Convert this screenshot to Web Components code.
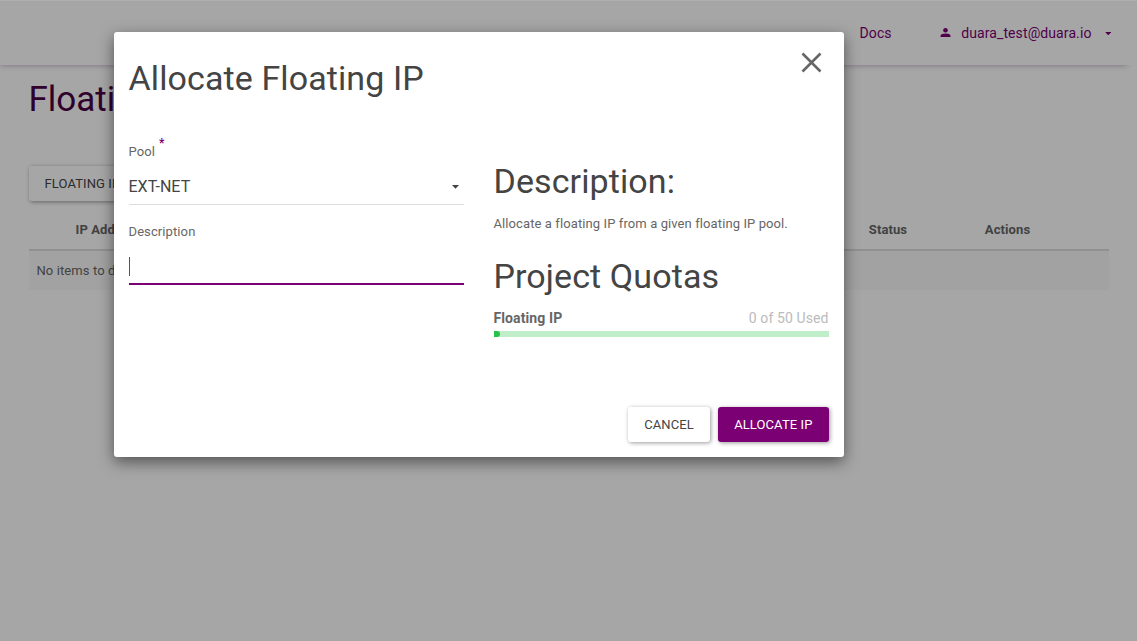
<!DOCTYPE html>
<html lang="en">
<head>
<meta charset="utf-8">
<title>Floating IPs</title>
<style>
html,body{margin:0;height:100%;overflow:hidden;background:#fff}
body{font:13px/24px Roboto,"Liberation Sans",sans-serif;letter-spacing:.1px;color:#666}
</style>
</head>
<body>
<app-page></app-page>
<script>
function define(name, html) {
  const t = document.createElement('template');
  t.innerHTML = html;
  customElements.define(name, class extends HTMLElement {
    constructor() {
      super();
      this.attachShadow({ mode: 'open' }).appendChild(t.content.cloneNode(true));
    }
  });
}

define('app-caret', `<style>
:host{display:block;width:7px;height:4px;line-height:0}
svg{display:block;width:100%;height:100%}
</style><svg width="7" height="4" viewBox="0 0 7 4"><path d="M0 0h7L3.5 3.8z" fill="currentColor"/></svg>`);

define('app-button', `<style>
:host{display:block;box-sizing:border-box;height:35px;padding:0 16px;border-radius:3px;background:#fff;color:#444;
font-size:13px;line-height:35px;letter-spacing:.1px;text-transform:uppercase;white-space:nowrap;box-shadow:1px 1px 4px rgba(0,0,0,.4)}
:host([primary]){background:#7b0073;color:#fff}
</style><slot></slot>`);

define('nav-bar', `<style>
:host{display:flex;box-sizing:border-box;height:65px;justify-content:flex-end;
padding:21px 26px 0 0;background:#fff;color:#7b0073;font-size:14px;letter-spacing:.1px;box-shadow:-5px 5px 6px -5px rgba(60,0,60,.34)}
.user{display:flex;margin-left:48.500px}
.user svg{margin:7px 10px 0 0}
app-caret{margin:10.500px 0 0 13px;width:6.500px;height:3.500px}
</style><span class="docs">Docs</span><div class="user">
<svg width="11" height="9" viewBox="0 0 11 9" fill="currentColor"><circle cx="5.500" cy="2.300" r="2.300"/><path d="M.5 9V7.800C.5 6.300 3.300 5.600 5.500 5.600s5 .7 5 2.200V9z"/></svg><span class="mail">duara_test@duara.io</span><app-caret></app-caret></div>`);

define('ip-table', `<style>
:host{display:block}
.head{display:grid;grid-template-columns:158px 623px 157px 82px 1fr;height:42px;box-sizing:border-box;
border-bottom:2px solid #ddd;font-weight:700;line-height:42px}
.head span{white-space:nowrap;text-align:center}
.head .ip{text-align:left;padding-left:47px}
.row{height:39px;line-height:39px;padding-left:8px;background:#f9f9f9}
</style><div class="head"><span class="ip">IP Add</span><span></span><span>Status</span><span>Actions</span></div>
<div class="row">No items to d</div>`);

define('form-field', `<style>
:host{display:block;letter-spacing:.1px}
.label{display:flex;height:24px}
.req{display:none;color:#7b0073;font-size:12px;font-weight:700;line-height:13px;margin-left:4px;margin-top:-3px}
:host([required]) .req{display:block}
.control{display:flex;height:41px;box-sizing:border-box;align-items:center;justify-content:space-between;
border-bottom:1px solid #ddd;color:#444;font-size:16px;letter-spacing:.03px;padding:5px 5px 0 0}
:host([focused]) .control{border-bottom:2px solid #7b0073}
::slotted(.cursor){width:1px;height:19px;background:#555}
</style><div class="label"><slot name="label"></slot><span class="req">*</span></div>
<div class="control"><slot></slot></div>`);

define('quota-meter', `<style>
:host{display:block;font-size:14px;letter-spacing:0}
.line{display:flex;justify-content:space-between;height:25px;line-height:24px}
b{font-weight:700;letter-spacing:.1px}
.used{color:#bbb;letter-spacing:.1px}
.track{height:6px;background:#c0eec8}
.bar{width:6px;height:6px;background:#27c24c;border-radius:0 3px 3px 0}
</style><div class="line"><b><slot></slot></b><span class="used"><slot name="used"></slot></span></div>
<div class="track"><div class="bar"></div></div>`);

define('modal-dialog', `<style>
:host{display:block;box-sizing:border-box;width:730px;height:425px;background:#fff;border-radius:3px;
box-shadow:0 5px 15px rgba(0,0,0,.5);padding:15px}
header{display:flex;justify-content:space-between;height:93px}
h3{margin:12px 0 0;font-size:34px;line-height:38px;font-weight:400;color:#444;letter-spacing:.1px}
header svg{margin:5px 6.500px 0 0}
.cols{display:grid;grid-template-columns:335px 335px;column-gap:30px;height:267px}
.right{padding-top:10px}
form-field+form-field{margin-top:15px}
.right p{margin:12px 0 0;height:24px}
.right h3.q{margin-top:21px}
quota-meter{margin-top:11px}
footer{display:flex;justify-content:flex-end;gap:8.300px}
app-caret{color:#444}
</style>
<header><h3>Allocate Floating IP</h3>
<svg width="21" height="21" viewBox="0 0 21 21"><path d="M1.500 1.500l18 18M19.500 1.500l-18 18" stroke="#666" stroke-width="2.6" fill="none"/></svg></header>
<div class="cols"><div class="left">
<form-field required><span slot="label">Pool</span><span>EXT-NET</span><app-caret></app-caret></form-field>
<form-field focused><span slot="label">Description</span><i class="cursor"></i></form-field>
</div><div class="right"><h3>Description:</h3><p>Allocate a floating IP from a given floating IP pool.</p>
<h3 class="q">Project Quotas</h3><quota-meter>Floating IP<span slot="used">0 of 50 Used</span></quota-meter></div></div>
<footer><app-button>Cancel</app-button><app-button primary>Allocate IP</app-button></footer>`);

define('app-page', `<style>
:host{display:block;position:relative;height:641px;overflow:hidden}
main{padding:15px 28px 0 28.500px}
h1{margin:0;font-size:35px;line-height:39px;height:39px;font-weight:400;color:#4a0046;letter-spacing:0}
.tools{display:flex;margin:47px 0 8px}
.overlay{position:absolute;inset:0;box-sizing:border-box;border-top:1px solid rgba(0,0,0,.31);background:rgba(0,0,0,.35) padding-box;
display:flex;justify-content:center;align-items:flex-start;padding:31px 180px 0 0}
</style><nav-bar></nav-bar>
<main><h1>Floati</h1><div class="tools"><app-button>Floating IP</app-button></div><ip-table></ip-table></main>
<div class="overlay"><modal-dialog></modal-dialog></div>`);
</script>
</body>
</html>
